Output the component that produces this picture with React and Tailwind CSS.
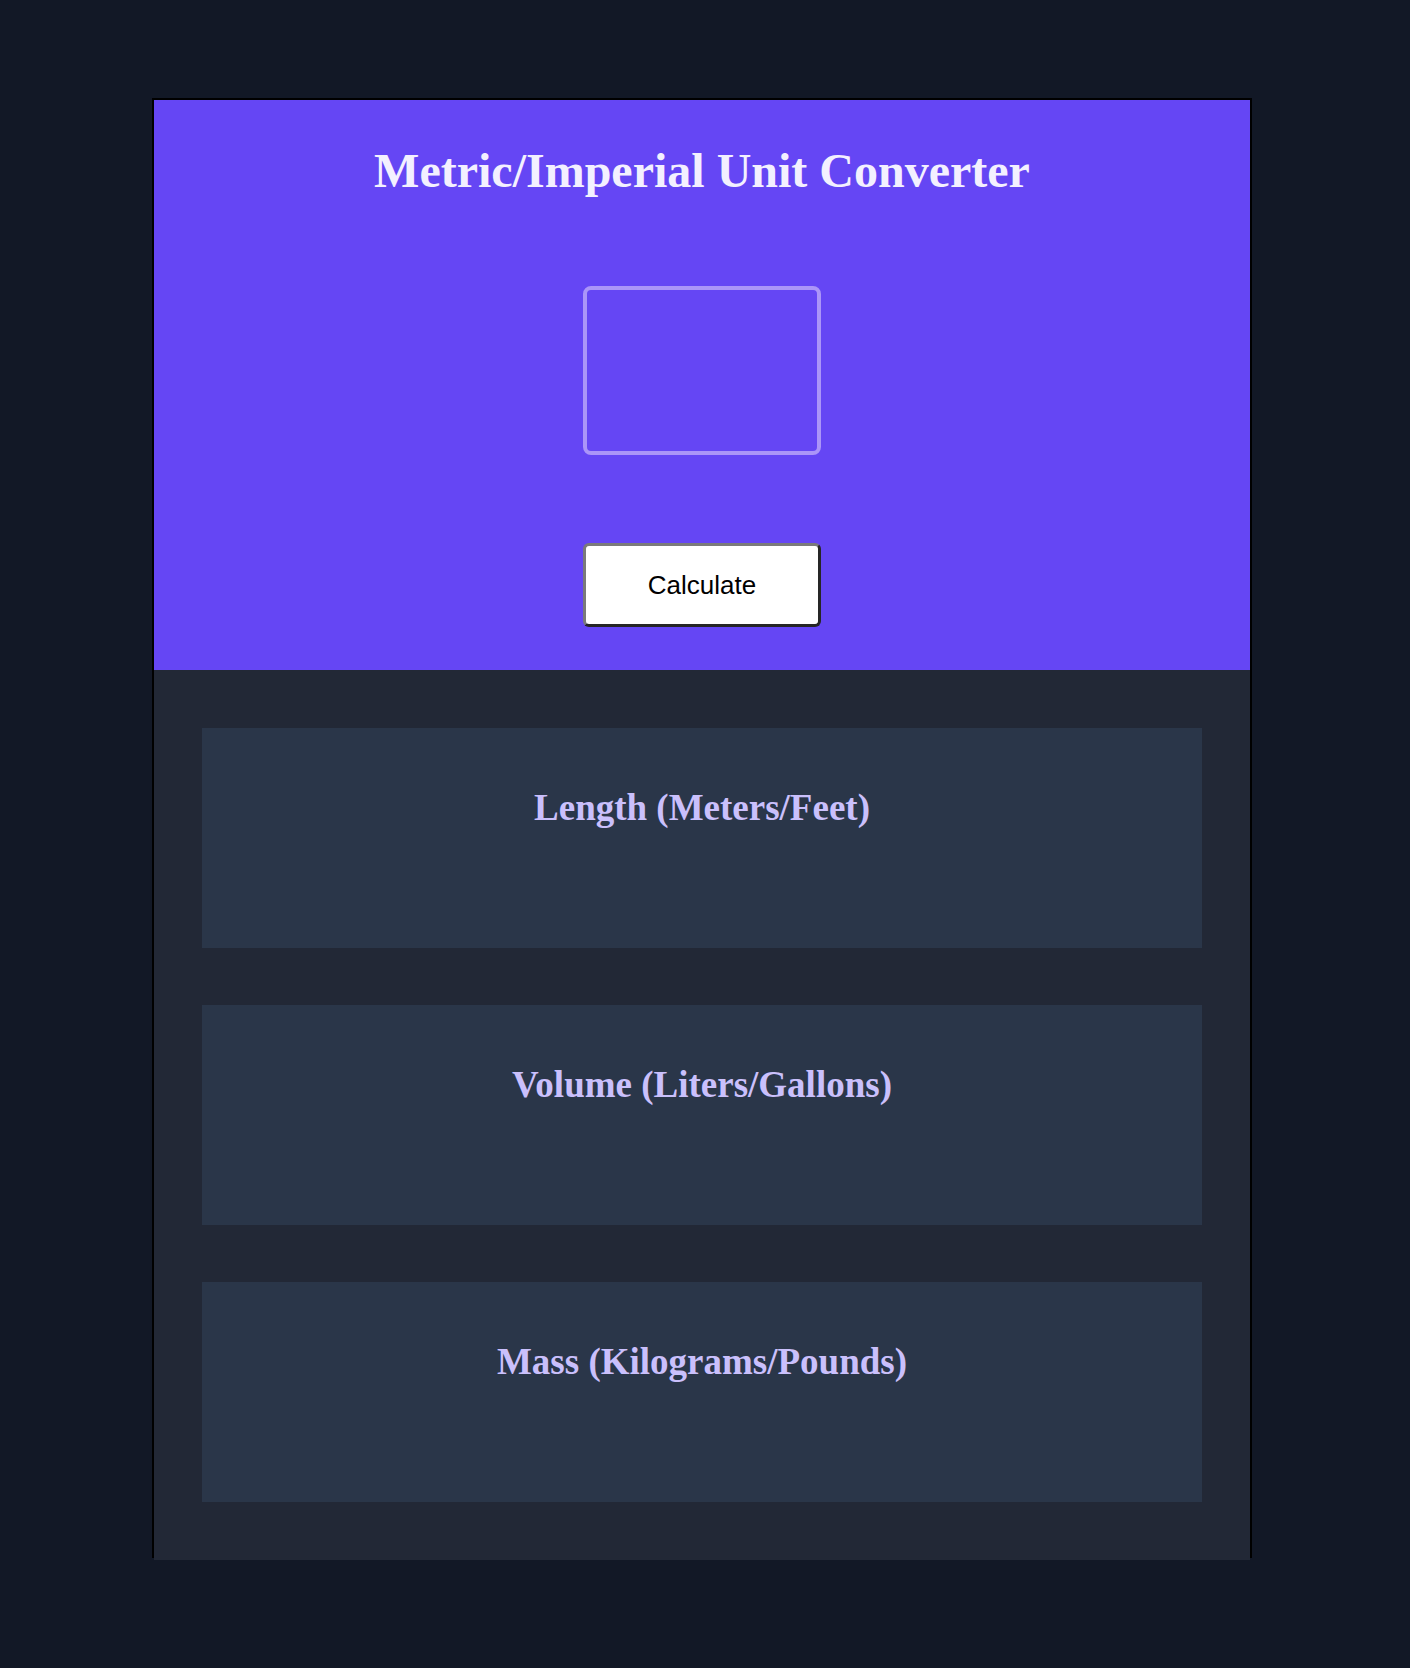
import { useState } from 'react';

const sections = [
  'Length (Meters/Feet)',
  'Volume (Liters/Gallons)',
  'Mass (Kilograms/Pounds)',
];

export default function App() {
  const [value, setValue] = useState('');

  return (
    <div className="min-h-[1668px] bg-[#121826] pt-[98px]">
      <div className="ml-[152px] w-[1100px] h-[1460px] border-2 border-black">
        <header className="bg-[#6546f4] flex flex-col items-center pt-[43px] pb-[43px]">
          <h1
            className="text-[48px] leading-[56px] font-bold text-[#f3f0ff]"
            style={{ fontFamily: '"Liberation Serif", serif' }}
          >
            Metric/Imperial Unit Converter
          </h1>
          <input
            type="text"
            value={value}
            onChange={e => setValue(e.target.value)}
            className="mt-[87px] w-[238px] h-[169px] rounded-[8px] border-4 border-[#ab95f8] bg-transparent text-white text-center outline-none"
          />
          <button
            className="mt-[88px] w-[238px] h-[84px] rounded-[6px] border-[3px] border-t-[#7a7a7a] border-l-[#7a7a7a] border-b-[#262626] border-r-[#262626] bg-white text-black text-[26px]"
            style={{ fontFamily: '"Liberation Sans", Arial, sans-serif' }}
          >
            Calculate
          </button>
        </header>

        <main className="bg-[#222836] px-[48px] pt-[58px] pb-[58px] flex flex-col gap-[57px]">
          {sections.map(title => (
            <section key={title} className="h-[220px] bg-[#2a3649] flex flex-col items-center pt-[58px]">
              <h2
                className="text-[37px] leading-[44px] font-bold text-[#cac0fc]"
                style={{ fontFamily: '"Liberation Serif", serif' }}
              >
                {title}
              </h2>
            </section>
          ))}
        </main>
      </div>
    </div>
  );
}
